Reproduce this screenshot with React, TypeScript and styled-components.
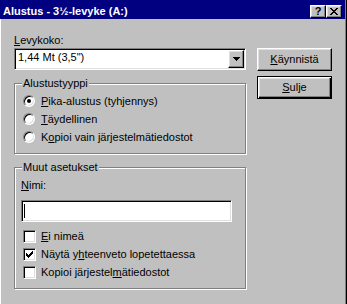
import React from 'react'
import styled, { createGlobalStyle } from 'styled-components'

const GlobalStyle = createGlobalStyle`
  html, body {
    margin: 0;
    padding: 0;
    background: #c0c0c0;
    overflow: hidden;
  }
  body {
    font-family: "Liberation Sans", Arial, sans-serif;
    font-size: 11px;
    color: #000;
  }
`

const raised = `
  border-style: solid;
  border-width: 1px;
  border-color: #fff #000 #000 #fff;
  box-shadow: inset -1px -1px 0 #808080, inset 1px 1px 0 #dfdfdf;
  background: #c0c0c0;
`

const sunken = `
  border-style: solid;
  border-width: 1px;
  border-color: #808080 #fff #fff #808080;
  box-shadow: inset 1px 1px 0 #000, inset -1px -1px 0 #dfdfdf;
  background: #fff;
`

const Window = styled.div`
  display: flex;
  flex-direction: column;
  width: 347px;
  height: 100vh;
  box-sizing: border-box;
  padding-right: 1px;
  border-right: 1px solid #000;
  box-shadow: inset -1px 0 0 #808080;
`

const TitleBar = styled.div`
  display: flex;
  align-items: flex-end;
  height: 19px;
  flex-shrink: 0;
  padding: 0 3px;
  background: #000080;
`

const TitleText = styled.div`
  flex: 1;
  color: #fff;
  font-weight: bold;
  font-size: 11px;
  line-height: 13px;
  margin-bottom: 1px;
  white-space: nowrap;
`

const CaptionButton = styled.div`
  ${raised}
  width: 16px;
  height: 13px;
  box-sizing: border-box;
  margin-bottom: 1px;
  display: flex;
  align-items: center;
  justify-content: center;
  font-weight: bold;
  font-size: 11px;
  line-height: 11px;
`

const Body = styled.div`
  flex: 1;
  display: flex;
  padding: 15px 0 0 13px;
  border-left: 1px solid #fff;
`

const LeftColumn = styled.div`
  width: 232px;
  display: flex;
  flex-direction: column;
`

const RightColumn = styled.div`
  width: 75px;
  margin-left: 11px;
  padding-top: 14px;
  display: flex;
  flex-direction: column;
  gap: 5px;
`

const Label = styled.div`
  line-height: 13px;
  margin-bottom: 1px;
`

const Combo = styled.div`
  ${sunken}
  height: 22px;
  box-sizing: border-box;
  display: flex;
  padding: 1px;
`

const ComboText = styled.div`
  flex: 1;
  padding: 1px 0 0 2px;
  line-height: 13px;
`

const DropButton = styled.div`
  ${raised}
  width: 16px;
  height: 18px;
  box-sizing: border-box;
  display: flex;
  align-items: center;
  justify-content: center;
`

const Group = styled.div<{ $top: number; $height: number }>`
  position: relative;
  margin-top: ${p => p.$top}px;
  height: ${p => p.$height}px;
  box-sizing: border-box;
  border: 1px solid #808080;
  box-shadow: inset 1px 1px 0 #fff, 1px 1px 0 #fff;
  display: flex;
  flex-direction: column;
`

const GroupCaption = styled.div`
  position: absolute;
  top: -7px;
  left: 7px;
  padding: 0 1px;
  line-height: 13px;
  background: #c0c0c0;
`

const OptionList = styled.div<{ $top: number }>`
  display: flex;
  flex-direction: column;
  padding: ${p => p.$top}px 0 0 8px;
`

const OptionRow = styled.div`
  display: flex;
  align-items: center;
  height: 18px;
  line-height: 13px;
`

const Radio = styled.span<{ $checked?: boolean }>`
  width: 12px;
  height: 12px;
  box-sizing: border-box;
  border-radius: 50%;
  border: 1px solid;
  border-color: #808080 #fff #fff #808080;
  box-shadow: inset 1px 1px 0 #000, inset -1px -1px 0 #dfdfdf;
  background: #fff;
  margin-right: 6px;
  display: flex;
  align-items: center;
  justify-content: center;
  flex-shrink: 0;

  &::after {
    content: '';
    display: ${p => (p.$checked ? 'block' : 'none')};
    width: 4px;
    height: 4px;
    border-radius: 50%;
    background: #000;
  }
`

const CheckBox = styled.span`
  ${sunken}
  width: 13px;
  height: 13px;
  box-sizing: border-box;
  margin-right: 5px;
  flex-shrink: 0;
  display: flex;
  align-items: center;
  justify-content: center;
`

const NameSection = styled.div`
  display: flex;
  flex-direction: column;
  padding: 11px 0 0 6px;
`

const TextField = styled.div`
  ${sunken}
  width: 211px;
  height: 22px;
  box-sizing: border-box;
  margin-top: 7px;
  padding: 3px 0 0 2px;
`

const Caret = styled.span`
  display: block;
  width: 1px;
  height: 14px;
  background: #000;
`

const PushButton = styled.div<{ $default?: boolean }>`
  height: 23px;
  box-sizing: border-box;
  display: flex;
  align-items: center;
  justify-content: center;
  line-height: 13px;
  background: #c0c0c0;
  ${p =>
    p.$default
      ? `
    border: 1px solid #000;
    box-shadow: inset 1px 1px 0 #fff, inset -1px -1px 0 #000, inset -2px -2px 0 #808080, inset 2px 2px 0 #dfdfdf;
  `
      : `
    border-style: solid;
    border-width: 1px;
    border-color: #fff #000 #000 #fff;
    box-shadow: inset -1px -1px 0 #808080, inset 1px 1px 0 #dfdfdf;
  `}
`

const CloseGlyph = () => (
  <svg width="8" height="7" viewBox="0 0 8 7" shapeRendering="crispEdges">
    <path
      fill="#000"
      d="M0 0h2v1H0zM6 0h2v1H6zM1 1h2v1H1zM5 1h2v1H5zM2 2h4v1H2zM3 3h2v1H3zM2 4h4v1H2zM1 5h2v1H1zM5 5h2v1H5zM0 6h2v1H0zM6 6h2v1H6z"
    />
  </svg>
)

const DownArrow = () => (
  <svg width="7" height="4" viewBox="0 0 7 4" shapeRendering="crispEdges">
    <path fill="#000" d="M0 0h7v1H0zM1 1h5v1H1zM2 2h3v1H2zM3 3h1v1H3z" />
  </svg>
)

const CheckMark = () => (
  <svg width="7" height="7" viewBox="0 0 7 7" shapeRendering="crispEdges">
    <path
      fill="#000"
      d="M6 0h1v1H6zM5 1h2v1H5zM0 2h1v1H0zM4 2h3v1H4zM0 3h2v1H0zM3 3h3v1H3zM0 4h5v1H0zM1 5h3v1H1zM2 6h1v1H2z"
    />
  </svg>
)

function App() {
  return (
    <>
      <GlobalStyle />
      <Window>
        <TitleBar>
          <TitleText>Alustus - 3½-levyke (A:)</TitleText>
          <CaptionButton>?</CaptionButton>
          <CaptionButton><CloseGlyph /></CaptionButton>
        </TitleBar>

        <Body>
          <LeftColumn>
            <Label><u>L</u>evykoko:</Label>
            <Combo>
              <ComboText>1,44 Mt (3,5")</ComboText>
              <DropButton><DownArrow /></DropButton>
            </Combo>

            {/* FORMAT TYPE */}
            <Group $top={13} $height={71}>
              <GroupCaption>Alustustyyppi</GroupCaption>
              <OptionList $top={8}>
                <OptionRow><Radio $checked /><span><u>P</u>ika-alustus (tyhjennys)</span></OptionRow>
                <OptionRow><Radio /><span><u>T</u>äydellinen</span></OptionRow>
                <OptionRow><Radio /><span>K<u>o</u>pioi vain järjestelmätiedostot</span></OptionRow>
              </OptionList>
            </Group>

            {/* OTHER OPTIONS */}
            <Group $top={13} $height={122}>
              <GroupCaption>Muut asetukset</GroupCaption>
              <NameSection>
                <Label><u>N</u>imi:</Label>
                <TextField><Caret /></TextField>
              </NameSection>
              <OptionList $top={5}>
                <OptionRow><CheckBox /><span><u>E</u>i nimeä</span></OptionRow>
                <OptionRow><CheckBox><CheckMark /></CheckBox><span>Näytä y<u>h</u>teenveto lopetettaessa</span></OptionRow>
                <OptionRow><CheckBox /><span>Kopioi järjestel<u>m</u>ätiedostot</span></OptionRow>
              </OptionList>
            </Group>
          </LeftColumn>

          <RightColumn>
            <PushButton><span><u>K</u>äynnistä</span></PushButton>
            <PushButton $default><span><u>S</u>ulje</span></PushButton>
          </RightColumn>
        </Body>
      </Window>
    </>
  )
}

export default App
